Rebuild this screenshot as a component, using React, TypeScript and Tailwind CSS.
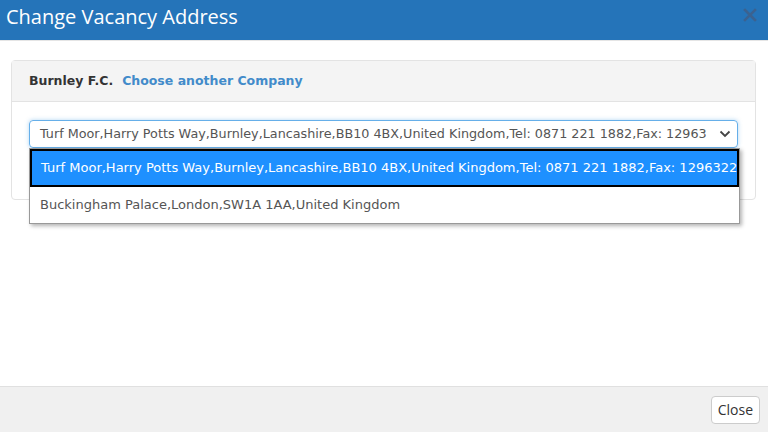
const selectText =
  "Turf Moor,Harry Potts Way,Burnley,Lancashire,BB10 4BX,United Kingdom,Tel: 0871 221 1882,Fax: 12963";
const option1 =
  "Turf Moor,Harry Potts Way,Burnley,Lancashire,BB10 4BX,United Kingdom,Tel: 0871 221 1882,Fax: 1296322";
const option2 = "Buckingham Palace,London,SW1A 1AA,United Kingdom";

function Chevron() {
  return (
    <svg width="12" height="8" viewBox="0 0 12 8" className="shrink-0">
      <path d="M1.5 1.5 L6 6 L10.5 1.5" fill="none" stroke="#444" strokeWidth="1.8" />
    </svg>
  );
}

function CloseX() {
  return (
    <svg width="14" height="14" viewBox="0 0 14 14">
      <path d="M2 2 L12 12 M12 2 L2 12" stroke="#3b6290" strokeWidth="2.6" strokeLinecap="square" />
    </svg>
  );
}

export default function App() {
  return (
    <div className="w-[768px] h-[432px] flex flex-col bg-white overflow-hidden font-['DejaVu_Sans',sans-serif]">
      {/* header */}
      <div className="h-[41px] shrink-0 bg-[#2574b9] flex items-start justify-between pl-[6px] pr-[11px] pt-[4px] border-b border-[#e5e5e5]">
        <h1 className="text-white text-[20px] leading-[26px] font-['Open_Sans',sans-serif]">Change Vacancy Address</h1>
        <div className="pt-[4px]">
          <CloseX />
        </div>
      </div>

      {/* body */}
      <div className="flex-1 px-[11px] pt-[19px]">
        <div className="w-[745px] border border-[#e3e3e3] rounded-[4px]">
          <div className="h-[41px] bg-[#f4f4f4] border-b border-[#e3e3e3] flex items-center px-[17px] gap-[9px] text-[12.5px]">
            <span className="font-bold text-[#333]">Burnley F.C.</span>
            <span className="font-bold text-[#428bca]">Choose another Company</span>
          </div>
          <div className="px-[17px] pt-[18px] pb-[51px]">
            <div className="relative">
              <div className="h-[28px] border border-[#66afe9] rounded-[4px] flex items-center justify-between pl-[10px] pr-[6px] shadow-[0_0_4px_rgba(102,175,233,0.5)] text-[12.75px] text-[#555]">
                <span className="whitespace-nowrap">{selectText}</span>
                <Chevron />
              </div>
              <div className="absolute left-0 top-[28px] w-[711px] bg-white border border-[#999] shadow-[2px_2px_4px_rgba(0,0,0,0.3)] text-[13px]">
                <div className="h-[38px] bg-[#1e90ff] border-2 border-black text-white flex items-center pl-[9px] whitespace-nowrap">
                  {option1}
                </div>
                <div className="h-[36px] text-[#555] flex items-center pl-[10px] whitespace-nowrap">{option2}</div>
              </div>
            </div>
          </div>
        </div>
      </div>

      {/* footer */}
      <div className="h-[46px] shrink-0 bg-[#f0f0f0] border-t border-[#e0e0e0] flex items-center justify-end pr-[8px]">
        <button className="h-[28px] px-[6px] bg-white border border-[#ccc] rounded-[4px] text-[14px] text-[#333] font-['Open_Sans',sans-serif]">
          Close
        </button>
      </div>
    </div>
  );
}
